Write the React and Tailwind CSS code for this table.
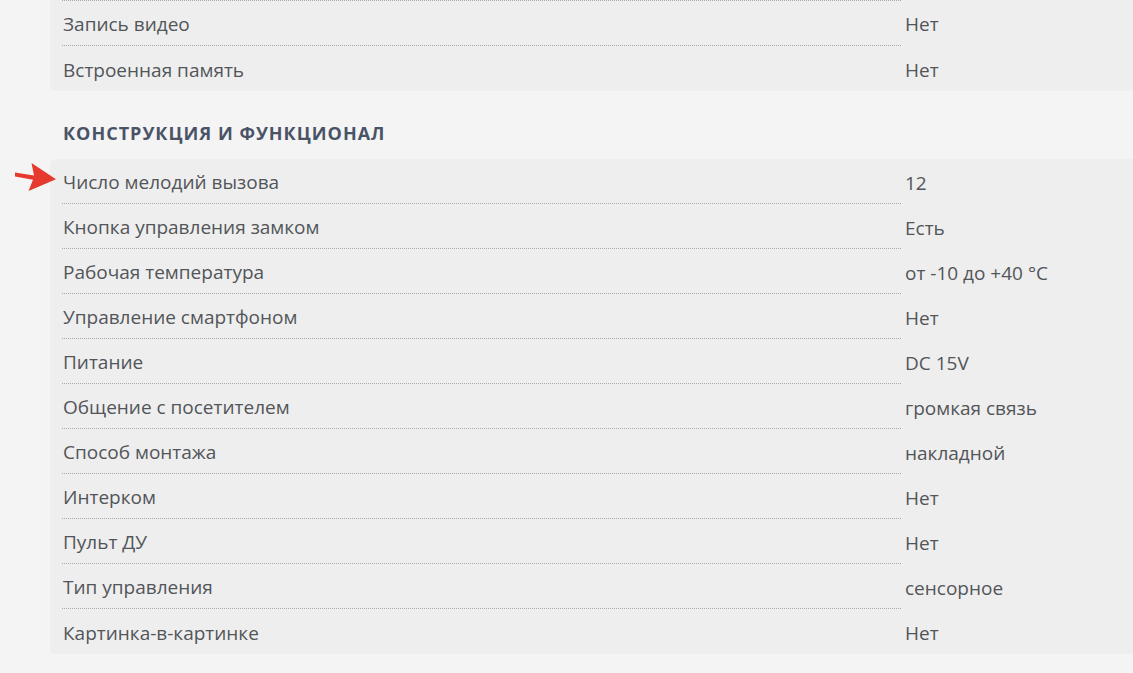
import React from "react";

const block1 = [
  ["Запись видео", "Нет"],
  ["Встроенная память", "Нет"],
];

const block2 = [
  ["Число мелодий вызова", "12"],
  ["Кнопка управления замком", "Есть"],
  ["Рабочая температура", "от -10 до +40 °C"],
  ["Управление смартфоном", "Нет"],
  ["Питание", "DC 15V"],
  ["Общение с посетителем", "громкая связь"],
  ["Способ монтажа", "накладной"],
  ["Интерком", "Нет"],
  ["Пульт ДУ", "Нет"],
  ["Тип управления", "сенсорное"],
  ["Картинка-в-картинке", "Нет"],
];

function Row({ label, value, last, topBorder }) {
  return (
    <div className={"flex " + (topBorder ? "h-[46px]" : "h-[45px]")}>
      <div
        className={
          "w-[839px] shrink-0 flex items-center pl-px pt-[2px] " +
          (last ? "" : "border-b border-dotted border-[#a9a9a9] ") +
          (topBorder ? "border-t border-dotted border-[#a9a9a9]" : "")
        }
      >
        {label}
      </div>
      <div className="flex items-center pl-[4px] pt-[2px]">{value}</div>
    </div>
  );
}

export default function App() {
  return (
    <div
      className="w-[1133px] h-[673px] overflow-hidden bg-[#f4f4f4] text-[19px] leading-6 text-[#525559]"
      style={{ fontFamily: '"Open Sans", "Liberation Sans", sans-serif' }}
    >
      <div className="relative pl-[50px]">
        <div className="w-[1120px] bg-[#eeeeee] rounded-b-[6px] pl-[12px]">
          {block1.map(([l, v], i) => (
            <Row key={l} label={l} value={v} last={i === block1.length - 1} topBorder={i === 0} />
          ))}
        </div>
        <h2 className="pl-[13px] mt-[30px] mb-[14px] text-[18px] leading-6 tracking-[1px] font-bold uppercase text-[#4a5366]">
          Конструкция и функционал
        </h2>
        <div className="w-[1120px] bg-[#eeeeee] rounded-[6px] pl-[12px]">
          {block2.map(([l, v], i) => (
            <Row key={l} label={l} value={v} last={i === block2.length - 1} />
          ))}
        </div>
        <svg
          className="absolute left-[10px] top-[160px]"
          width="50"
          height="35"
          viewBox="0 0 50 35"
        >
          <polygon
            points="5,12.5 24,15.5 21.5,3 46,19.3 18.5,31 23,19.8 5,16.5"
            fill="#e63a2e"
          />
        </svg>
      </div>
    </div>
  );
}
